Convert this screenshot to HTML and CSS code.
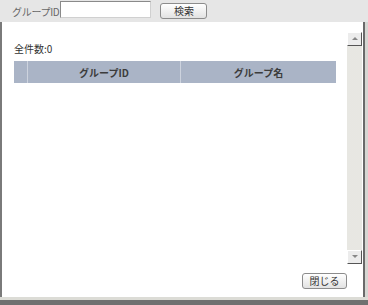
FILE: index.html
```html
<!DOCTYPE html>
<html lang="ja">
<head>
    <meta charset="UTF-8">
    <title>グループ検索</title>
    <link rel="stylesheet" href="styles.css">
</head>
<body>
    <div class="page">
        <div class="toolbar">
            <span class="label">グループID</span>
            <input type="text" class="search-input">
            <button type="button" class="btn btn-search">検索</button>
        </div>
        <div class="main">
            <div class="content">
                <p class="count">全件数:0</p>
                <table class="grid">
                    <tr>
                        <th class="col-check"></th>
                        <th class="col-id">グループID</th>
                        <th class="col-name">グループ名</th>
                    </tr>
                </table>
                <div class="footer">
                    <button type="button" class="btn btn-close">閉じる</button>
                </div>
            </div>
            <div class="scrollbar">
                <div class="arrow arrow-up"></div>
                <div class="track"></div>
                <div class="arrow arrow-down"></div>
            </div>
        </div>
        <div class="bottom-edge"></div>
    </div>
</body>
</html>
```

FILE: styles.css
```css
body {
    margin: 0;
    background-color: #d6d6d2;
    font-family: "Noto Sans CJK JP", "DejaVu Sans", sans-serif;
    font-size: 10px;
    color: #333;
}
.page {
    width: 368px;
    height: 305px;
    display: flex;
    flex-direction: column;
}
.toolbar {
    height: 22px;
    background-color: #e6e6e6;
    display: flex;
    align-items: center;
    padding-left: 12px;
    box-sizing: border-box;
}
.label {
    color: #666;
    font-size: 10px;
    letter-spacing: -0.3px;
}
.search-input {
    width: 91px;
    height: 17px;
    margin: 0 0 3px 1px;
    padding: 0;
    border: 1px solid #8a8a8a;
    border-right-color: #d0d0d0;
    border-bottom-color: #d0d0d0;
    box-sizing: border-box;
    background-color: #fff;
}
.btn {
    font-family: "Noto Sans CJK JP", "DejaVu Sans", sans-serif;
    font-size: 10px;
    color: #333;
    height: 16px;
    padding: 0;
    border: 1px solid #8c8c8c;
    border-radius: 3px;
    background: linear-gradient(#ffffff, #e2e2e2);
    box-sizing: border-box;
    line-height: 14px;
    cursor: pointer;
}
.btn-search {
    width: 47px;
    margin: 0 0 0 9px;
}
.main {
    flex: 1;
    display: flex;
    background-color: #fff;
    border-left: 2px solid #7a7a7a;
    border-right: 2px solid #6a6a6a;
    margin-right: 3px;
}
.content {
    flex: 1;
    display: flex;
    flex-direction: column;
    padding: 20px 10px 0 12px;
}
.count {
    margin: 0 0 5px 0;
    font-size: 10px;
    line-height: 14px;
    color: #333;
}
.grid {
    width: 322px;
    border-collapse: collapse;
}
.grid th {
    height: 22px;
    padding: 0;
    background-color: #aab4c6;
    border-right: 1px solid #cdd3de;
    color: #3c3c3c;
    font-size: 10px;
    font-weight: bold;
    text-align: center;
}
.grid th:last-child {
    border-right: none;
}
.col-check {
    width: 13px;
}
.col-id {
    width: 152px;
}
.footer {
    margin-top: auto;
    display: flex;
    justify-content: flex-end;
    padding-bottom: 8px;
    margin-right: -10px;
}
.btn-close {
    width: 45px;
}
.scrollbar {
    width: 15px;
    margin: 10px 1px 33px 0;
    display: flex;
    flex-direction: column;
}
.arrow {
    height: 12px;
    background-color: #ececec;
    border-right: 1px solid #555;
    border-bottom: 1px solid #555;
    border-top: 1px solid #fff;
    border-left: 1px solid #fff;
    position: relative;
}
.arrow::after {
    content: "";
    position: absolute;
    left: 4px;
    width: 0;
    height: 0;
    border-left: 3px solid transparent;
    border-right: 3px solid transparent;
}
.arrow-up::after {
    top: 4px;
    border-bottom: 3px solid #888;
}
.arrow-down::after {
    top: 4px;
    border-top: 3px solid #888;
}
.track {
    flex: 1;
    background-color: #efeeea;
    background-image: radial-gradient(#dfded8 0.6px, transparent 0.8px);
    background-size: 2px 2px;
}
.bottom-edge {
    height: 8px;
    border-top: 3px solid #dcdcd6;
    background-color: #707070;
    box-sizing: border-box;
}
```
